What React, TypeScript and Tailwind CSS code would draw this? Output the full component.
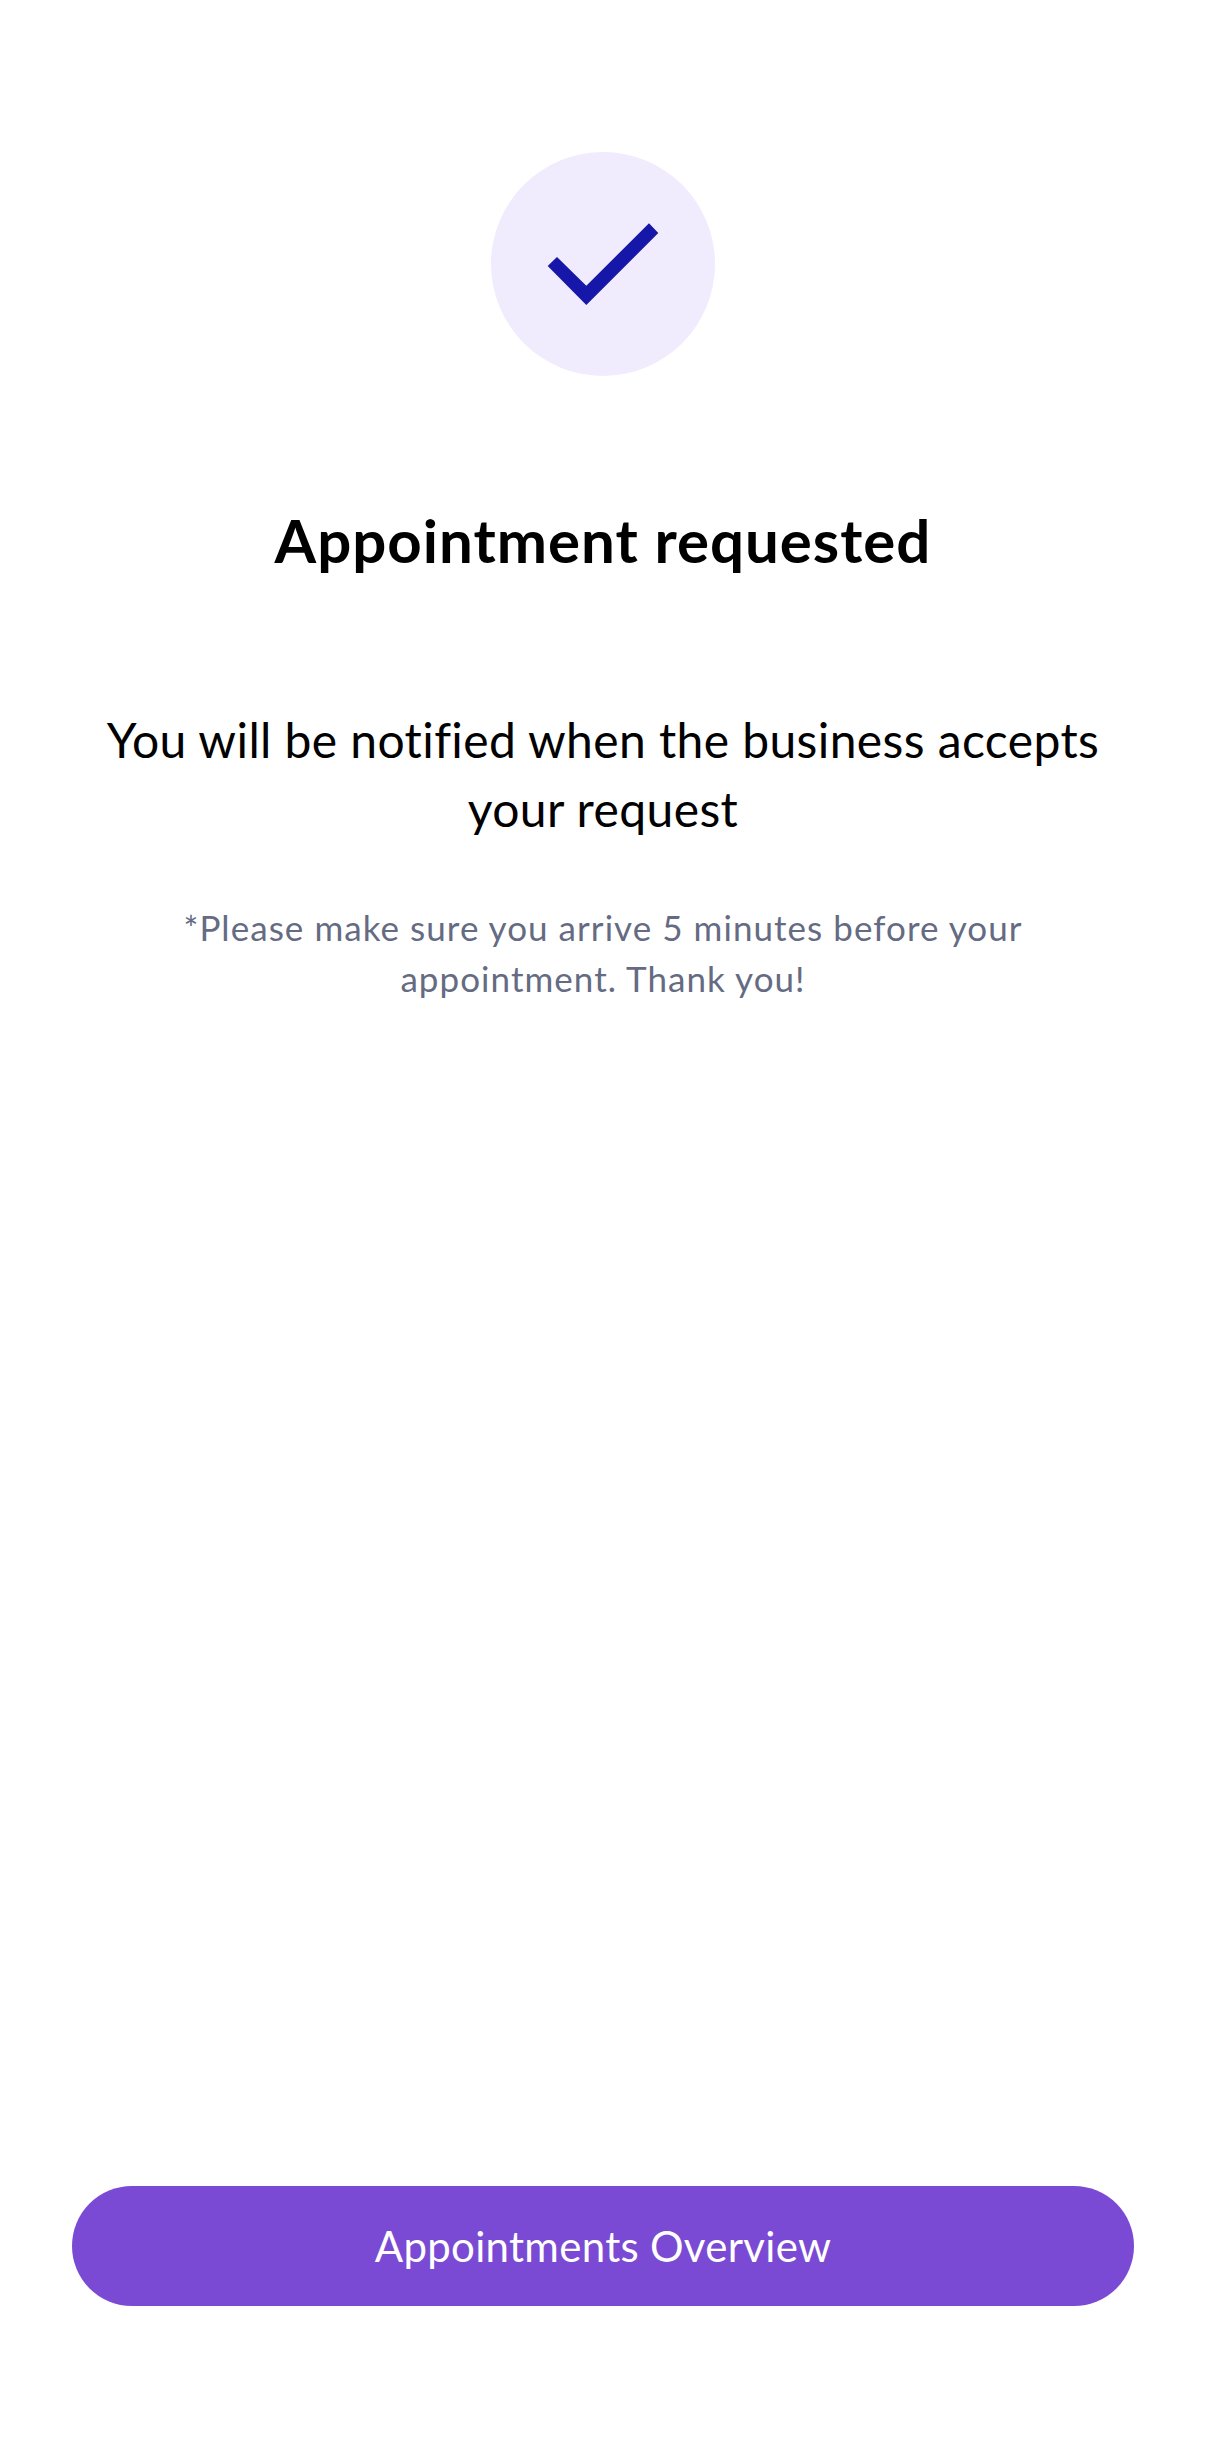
export default function App() {
  return (
    <div className="flex h-[2449px] w-[1206px] flex-col items-center bg-white font-['Lato',sans-serif]">
      <div className="mt-[152px] flex h-[224px] w-[224px] items-center justify-center rounded-full bg-[#f0ebfd]">
        <svg width="224" height="224" viewBox="0 0 224 224">
          <polygon
            fill="#1616a8"
            points="56.7,114 66,105 95.3,133.7 158,71.3 167.3,81 95.3,153"
          />
        </svg>
      </div>
      <h1 className="mt-[128px] text-[60px] leading-[72px] font-bold tracking-[1px] text-black">
        Appointment requested
      </h1>
      <p className="mt-[129px] w-[1040px] text-center text-[48px] leading-[69px] tracking-[0.4px] text-black">
        You will be notified when the business accepts your request
      </p>
      <p className="mt-[59px] w-[900px] text-center text-[35px] leading-[51px] tracking-[1.05px] text-[#646b82]">
        *Please make sure you arrive 5 minutes before your appointment. Thank
        you!
      </p>
      <div className="flex-1" />
      <button className="mb-[143px] flex h-[120px] w-[1062px] items-center justify-center rounded-[60px] bg-[#7b4ad4] text-[42px] font-normal tracking-[0.3px] text-white">
        Appointments Overview
      </button>
    </div>
  )
}
